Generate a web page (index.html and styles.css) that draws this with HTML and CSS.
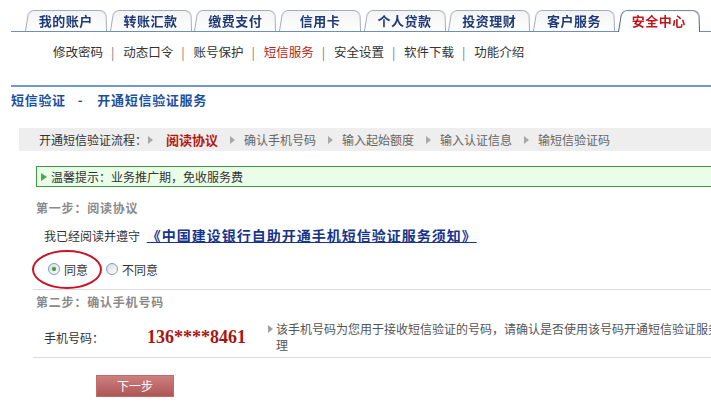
FILE: index.html
```html
<!DOCTYPE html>
<html lang="zh-CN">
<head>
<meta charset="utf-8">
<title>短信验证</title>
<link rel="stylesheet" href="styles.css">
</head>
<body>
<div class="page">
  <nav class="tabs">
    <div class="tab">我的账户</div>
    <div class="tab">转账汇款</div>
    <div class="tab">缴费支付</div>
    <div class="tab">信用卡</div>
    <div class="tab">个人贷款</div>
    <div class="tab">投资理财</div>
    <div class="tab">客户服务</div>
    <div class="tab active">安全中心</div>
  </nav>
  <div class="subnav">
    <span>修改密码</span><span class="sep">|</span>
    <span>动态口令</span><span class="sep">|</span>
    <span>账号保护</span><span class="sep">|</span>
    <span class="cur">短信服务</span><span class="sep">|</span>
    <span>安全设置</span><span class="sep">|</span>
    <span>软件下载</span><span class="sep">|</span>
    <span>功能介绍</span>
  </div>
  <div class="rule"></div>
  <h1 class="title">短信验证<span class="dash">-</span>开通短信验证服务</h1>
  <div class="flow">
    <span class="flow-label">开通短信验证流程：</span>
    <i class="arr"></i><span class="step cur">阅读协议</span>
    <i class="arr"></i><span class="step">确认手机号码</span>
    <i class="arr"></i><span class="step">输入起始额度</span>
    <i class="arr"></i><span class="step">输入认证信息</span>
    <i class="arr"></i><span class="step">输短信验证码</span>
  </div>
  <div class="notice"><i class="garr"></i>温馨提示：业务推广期，免收服务费</div>
  <div class="step-title">第一步：阅读协议</div>
  <div class="agree">我已经阅读并遵守 <a class="doc">《中国建设银行自助开通手机短信验证服务须知》</a></div>
  <div class="radios">
    <span class="ellipse"></span>
    <span class="radio checked"></span><span class="rlabel first">同意</span>
    <span class="radio"></span><span class="rlabel">不同意</span>
  </div>
  <div class="step-title second">第二步：确认手机号码</div>
  <div class="phone-row">
    <span class="plabel">手机号码：</span>
    <span class="phone">136****8461</span>
    <i class="harr"></i>
    <span class="hint">该手机号码为您用于接收短信验证的号码，请确认是否使用该号码开通短信验证服务办理</span>
  </div>
  <div class="btn">下一步</div>
</div>
</body>
</html>
```

FILE: styles.css
```css
html { overflow: hidden; }
body {
  margin: 0;
  background: #fff;
  font-family: "Noto Sans CJK SC", "Noto Sans", sans-serif;
  font-size: 12px;
  color: #333;
}
.page { width: 820px; }

.tabs {
  display: flex;
  gap: 3px;
  margin: 9px 0 0 11px;
  padding-left: 14px;
  height: 22px;
  border-bottom: 1px solid #6d8ebf;
}
.tab {
  position: relative;
  isolation: isolate;
  width: 81.7px;
  height: 22px;
  display: flex;
  align-items: center;
  justify-content: center;
  font-size: 13px;
  font-weight: bold;
  letter-spacing: 0.5px;
  color: #1f3a78;
  line-height: 1;
}
.tab::before {
  content: "";
  position: absolute;
  inset: 0;
  z-index: -1;
  border: 1px solid #a3acb8;
  border-bottom: 0;
  border-radius: 6px 7px 0 0;
  background: linear-gradient(#f3f3f3, #ffffff);
  transform: perspective(30px) rotateX(4deg);
  transform-origin: 85% bottom;
}
.tab.active {
  color: #c0161b;
  height: 23px;
  margin-bottom: -1px;
}
.tab.active::before {
  border-color: #4f6480;
  background: #fff;
}

.subnav {
  margin-top: 11px;
  padding-left: 53px;
  font-size: 12.5px;
  line-height: 18px;
  color: #333;
}
.subnav .cur { color: #b3261e; }
.subnav .sep { color: #777; margin: 0 6px 0 8px; }

.rule {
  margin: 24px 0 0 11px;
  height: 2px;
  background: #6f98cc;
}
.title {
  margin: 5px 0 0 11px;
  font-size: 13px;
  line-height: 16px;
  font-weight: bold;
  color: #1c4f9c;
  letter-spacing: 0.7px;
}
.title .dash { margin: 0 14px 0 12px; }

.flow {
  margin: 20px 0 0 19px;
  padding-left: 20px;
  height: 23px;
  line-height: 23px;
  background: #eeeeee;
  display: flex;
  align-items: center;
  color: #666;
}
.flow-label { color: #333; margin-right: 1px; }
.flow .arr {
  width: 0; height: 0;
  border-left: 5px solid #a8a8a8;
  border-top: 4px solid transparent;
  border-bottom: 4px solid transparent;
  margin-right: 9px;
}
.flow .step { margin-right: 12px; }
.flow .step.cur {
  color: #b31a12;
  font-weight: bold;
  font-size: 13px;
  margin-left: 4px;
  margin-right: 12px;
}

.notice {
  margin: 15px 0 0 36px;
  height: 19px;
  line-height: 19px;
  border: 1px solid #3c9b3c;
  border-right: 0;
  background: #e9fde9;
  display: flex;
  align-items: center;
  padding-left: 4px;
  color: #333;
}
.garr {
  width: 0; height: 0;
  border-left: 6px solid #4aa84a;
  border-top: 4px solid transparent;
  border-bottom: 4px solid transparent;
  margin-right: 4px;
}

.step-title {
  margin: 13px 0 0 36px;
  font-weight: bold;
  line-height: 16px;
  color: #8a8a8a;
  letter-spacing: 0.8px;
}
.step-title.second { margin-top: 4px; }

.agree {
  margin: 9px 0 0 44px;
  line-height: 20px;
  color: #333;
}
.doc {
  margin-left: 4px;
  font-size: 14px;
  font-weight: bold;
  color: #16348c;
  text-decoration: underline;
  letter-spacing: 1px;
}

.radios {
  position: relative;
  margin: 13px 0 0 33px;
  padding: 0 0 10px 15px;
  height: 20px;
  border-bottom: 1px solid #dddddd;
  display: flex;
  align-items: center;
}
.radio {
  width: 10px;
  height: 10px;
  border: 1px solid #7f9db9;
  border-radius: 50%;
  background: linear-gradient(135deg, #d8dcdf, #ffffff);
  display: flex;
  align-items: center;
  justify-content: center;
}
.radio.checked::after {
  content: "";
  width: 4px;
  height: 4px;
  border-radius: 50%;
  background: #3aa13a;
  box-shadow: 0 0 1px #7ccc7c;
}
.rlabel { margin: 0 6px 0 4px; }
.rlabel.first { margin-right: 18px; }
.ellipse {
  position: absolute;
  left: -1px;
  top: -9px;
  width: 66px;
  height: 35px;
  border: 2px solid #cc1326;
  border-radius: 50%;
}

.phone-row {
  margin: 11px 0 0 33px;
  padding: 0 0 4px 11px;
  border-bottom: 1px solid #dddddd;
  display: flex;
  align-items: center;
  height: 32px;
}
.plabel { width: 103px; }
.phone {
  width: 121px;
  font-family: "Liberation Serif", serif;
  font-weight: bold;
  font-size: 18px;
  color: #a8150f;
  line-height: 20px;
}
.harr {
  align-self: flex-start;
  margin-top: 4px;
  width: 0; height: 0;
  border-left: 5px solid #a0a0a0;
  border-top: 4px solid transparent;
  border-bottom: 4px solid transparent;
  margin-right: 3px;
}
.hint {
  width: 456px;
  flex: none;
  line-height: 16px;
  color: #555;
}

.btn {
  margin: 17px 0 0 96px;
  width: 78px;
  height: 22px;
  line-height: 22px;
  text-align: center;
  color: #fff;
  background: linear-gradient(#cf8080, #ad5454);
  box-shadow: inset 0 0 0 1px #c06a6a;
}
```
